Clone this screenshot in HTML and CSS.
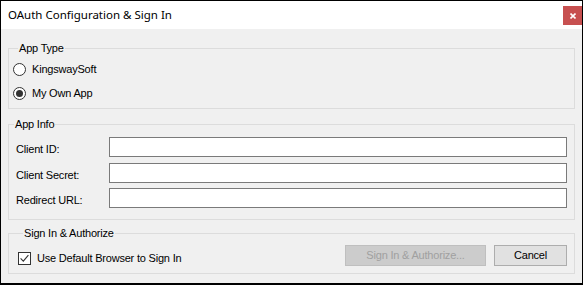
FILE: index.html
```html
<!DOCTYPE html>
<html>
<head>
<meta charset="utf-8">
<link rel="stylesheet" href="styles.css">
</head>
<body>
<div class="window">
  <div class="titlebar">
    <span class="title">OAuth Configuration &amp; Sign In</span>
    <span class="close"><svg width="6" height="6" viewBox="0 0 6 6"><path d="M0.5 0.5 L5.5 5.5 M5.5 0.5 L0.5 5.5" stroke="#fff" stroke-width="1.6" fill="none"/></svg></span>
  </div>
  <div class="content">
    <fieldset class="group group-type">
      <legend>App Type</legend>
      <div class="radio-list">
        <div class="radio-row"><span class="radio"></span><span>KingswaySoft</span></div>
        <div class="radio-row"><span class="radio checked"></span><span>My Own App</span></div>
      </div>
    </fieldset>
    <fieldset class="group group-info">
      <legend>App Info</legend>
      <div class="form-rows">
        <div class="form-row"><span class="field-label">Client ID:</span><span class="input"></span></div>
        <div class="form-row gap6"><span class="field-label">Client Secret:</span><span class="input"></span></div>
        <div class="form-row gap5"><span class="field-label">Redirect URL:</span><span class="input"></span></div>
      </div>
    </fieldset>
    <fieldset class="group group-sign">
      <legend>Sign In &amp; Authorize</legend>
      <div class="sign-row">
        <div class="check-row">
          <span class="checkbox"><svg width="13" height="13" viewBox="0 0 13 13"><rect x="0.5" y="0.5" width="12" height="12" fill="#fff" stroke="#333"/><path d="M2.6 6.4 L5.3 9.1 L10.4 3.2" stroke="#333" stroke-width="1.1" fill="none"/></svg></span>
          <span>Use Default Browser to Sign In</span>
        </div>
        <div class="buttons">
          <span class="btn btn-disabled">Sign In &amp; Authorize...</span>
          <span class="btn btn-cancel">Cancel</span>
        </div>
      </div>
    </fieldset>
  </div>
</div>
</body>
</html>
```
FILE: styles.css
```css
* { box-sizing: border-box; }
html, body { margin: 0; padding: 0; }
body {
  width: 583px;
  height: 285px;
  overflow: hidden;
  font-family: "Liberation Sans", Arial, sans-serif;
  font-size: 11px;
  letter-spacing: -0.2px;
  line-height: 13px;
  color: #000;
}
.window {
  width: 583px;
  height: 285px;
  border: 1px solid #000;
  border-bottom-width: 2px;
  display: flex;
  flex-direction: column;
  background: #f0f0f0;
}
.titlebar {
  height: 28px;
  background: #fff;
  display: flex;
  align-items: flex-start;
  justify-content: space-between;
  padding-left: 7px;
}
.title {
  font-family: "Noto Sans", sans-serif;
  font-size: 11.5px;
  letter-spacing: 0;
  line-height: 16px;
  margin-top: 6px;
}
.close {
  width: 19px;
  height: 19px;
  margin-top: 5px;
  background: #c75050;
  display: flex;
  align-items: center;
  justify-content: center;
}
.content {
  flex: 1;
  padding: 13px 7px 0 7px;
  display: flex;
  flex-direction: column;
}
.group {
  margin: 0;
  padding: 0;
  border: 1px solid #dcdcdc;
  min-width: 0;
}
.group legend {
  margin-left: 5px;
  padding: 0 1px;
  line-height: 13px;
}
.group-type { padding: 8px 0 8px 4px; }
.group-info { margin-top: 9px; padding: 6px 7px 11px 0; }
.group-sign { margin-top: 7px; padding: 5px 7px 7px 9px; }

.radio-list { display: flex; flex-direction: column; gap: 11px; }
.radio-row { display: flex; align-items: center; height: 13px; gap: 6px; }
.radio {
  width: 13px;
  height: 13px;
  border-radius: 50%;
  border: 1px solid #333;
  background: #fff;
  display: flex;
  align-items: center;
  justify-content: center;
}
.radio.checked::after {
  content: "";
  width: 7px;
  height: 7px;
  border-radius: 50%;
  background: #333;
}

.form-rows { display: flex; flex-direction: column; }
.form-row { display: flex; align-items: center; height: 20px; }
.form-row.gap6 { margin-top: 6px; }
.form-row.gap5 { margin-top: 5px; }
.field-label { width: 100px; padding-left: 7px; padding-top: 4px; }
.input {
  flex: 1;
  height: 20px;
  border: 1px solid #7a7a7a;
  background: #fff;
}

.sign-row { display: flex; justify-content: space-between; align-items: flex-start; }
.check-row { display: flex; align-items: center; gap: 6px; margin-top: 7px; }
.checkbox { width: 13px; height: 13px; display: block; }
.checkbox svg { display: block; }
.buttons { display: flex; gap: 8px; }
.btn {
  height: 21px;
  border: 1px solid #adadad;
  background: #e1e1e1;
  display: flex;
  align-items: center;
  justify-content: center;
}
.btn-disabled {
  width: 141px;
  background: #cccccc;
  border-color: #bfbfbf;
  color: #a0a0a0;
}
.btn-cancel { width: 73px; }
```
